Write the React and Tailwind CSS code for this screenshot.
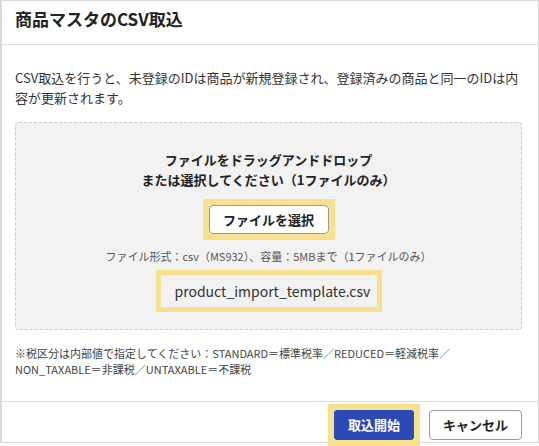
export default function App() {
  return (
    <div className="h-[446px] w-[539px] bg-white font-['Noto_Sans_CJK_JP',sans-serif]">
      <div className="flex h-[443px] w-[539px] flex-col border border-l-2 border-[#d9d9d9] bg-white text-[#333]">
        {/* Header */}
        <div className="h-[44px] shrink-0 border-b border-[#dddddd] pl-[13px] pt-[6px]">
          <h1 className="text-[17px] font-bold leading-[24px] text-[#222]">商品マスタのCSV取込</h1>
        </div>

        {/* Body */}
        <div className="pl-[13px] pr-[16px] pt-[23px]">
          <p className="text-[13px] leading-[20px]">
            CSV取込を行うと、未登録のIDは商品が新規登録され、登録済みの商品と同一のIDは内
            <br />
            容が更新されます。
          </p>

          <div className="mt-[14px] flex h-[208px] flex-col items-center rounded-[4px] border border-dashed border-[#cccccc] bg-[#f2f2f2] pt-[27px]">
            <p className="text-center text-[13px] font-bold leading-[20px] text-[#222]">
              ファイルをドラッグアンドドロップ
              <br />
              または選択してください（1ファイルのみ）
            </p>
            <div className="mt-[9px] border-[6px] border-[#f9e08f]">
              <button className="flex h-[29px] w-[120px] items-center justify-center rounded-[4px] border border-[#999] bg-white text-[13px] font-bold text-[#222]">
                ファイルを選択
              </button>
            </div>
            <p className="mt-[8px] text-[11px] leading-[16px] text-[#555]">
              ファイル形式：csv（MS932）、容量：5MBまで（1ファイルのみ）
            </p>
            <div className="mt-[6px] flex h-[42px] w-[226px] items-center border-[5px] border-[#f9e08f] bg-[#f2f2f2] pl-[14px]">
              <span className="text-[14px] text-[#333]">product_import_template.csv</span>
            </div>
          </div>

          <p className="mt-[15px] text-[11px] leading-[16px] text-[#444]">
            ※税区分は内部値で指定してください：STANDARD＝標準税率／REDUCED＝軽減税率／
            <br />
            NON_TAXABLE＝非課税／UNTAXABLE＝不課税
          </p>
        </div>

        {/* Footer */}
        <div className="mt-auto flex h-[41px] shrink-0 justify-end gap-[15px] border-t border-[#dddddd] pr-[16px] pt-[8px]">
          <div className="h-[30px] ring-[6px] ring-[#f9e08f]">
            <button className="h-[30px] w-[80px] rounded-[3px] bg-[#2b4ab5] text-[13px] font-bold text-white">
              取込開始
            </button>
          </div>
          <button className="h-[30px] w-[93px] rounded-[4px] border border-[#999] bg-white text-[13px] font-bold text-[#222]">
            キャンセル
          </button>
        </div>
      </div>
    </div>
  );
}
